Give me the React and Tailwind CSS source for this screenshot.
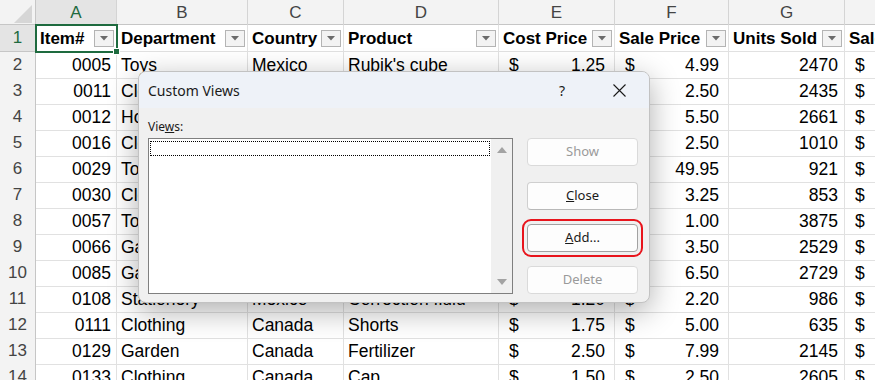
import React from "react";

const GRID = "grid grid-cols-[36px_81px_131px_96px_155px_116px_114px_116px_116px] w-[961px]";

const rows = [
  ["0005", "Toys", "Mexico", "Rubik's cube", "1.25", "4.99", "2470"],
  ["0011", "Clothing", "Canada", "Hat", "1.00", "2.50", "2435"],
  ["0012", "Home", "Mexico", "Coffee mug", "2.00", "5.50", "2661"],
  ["0016", "Clothing", "Canada", "Socks", "0.75", "2.50", "1010"],
  ["0029", "Toys", "Mexico", "Scooter", "20.00", "49.95", "921"],
  ["0030", "Clothing", "Mexico", "Belt", "1.10", "3.25", "853"],
  ["0057", "Toys", "Canada", "Yo-yo", "0.25", "1.00", "3875"],
  ["0066", "Garden", "Canada", "Seeds", "1.00", "3.50", "2529"],
  ["0085", "Garden", "Mexico", "Gloves", "2.00", "6.50", "2729"],
  ["0108", "Stationery", "Mexico", "Correction fluid", "1.20", "2.20", "986"],
  ["0111", "Clothing", "Canada", "Shorts", "1.75", "5.00", "635"],
  ["0129", "Garden", "Canada", "Fertilizer", "2.50", "7.99", "2145"],
  ["0133", "Clothing", "Canada", "Cap", "1.50", "2.50", "2605"],
];

const headers = ["Item#", "Department", "Country", "Product", "Cost Price", "Sale Price", "Units Sold", "Sales"];
const letters = ["A", "B", "C", "D", "E", "F", "G", "H"];

// filter dropdown box in header cells
const FilterBtn = () => (
  <div className="ml-auto mr-[2px] w-[20px] h-[17px] shrink-0 border border-[#b4b4b4] bg-[#f3f3f3] flex items-center justify-center">
    <svg width="8" height="5" viewBox="0 0 8 5">
      <path d="M0 0 L8 0 L4 4.5 Z" fill="#6b6b6b" />
    </svg>
  </div>
);

const Acct = ({ value }) => (
  <div className="flex items-center justify-between w-full pl-[10px] pr-[9px]">
    <span>$</span>
    <span>{value}</span>
  </div>
);

const cell = "border-r border-b border-[#e1e1e1] flex items-center whitespace-nowrap overflow-hidden";

const Sheet = () => (
  <div className="text-black" style={{ fontFamily: '"Liberation Sans", Arial, sans-serif' }}>
    {/* column letters */}
    <div className={`${GRID} h-[25px] bg-[#f3f3f3] border-b border-[#c6c6c6]`}>
      <div className="border-r border-[#c6c6c6] flex items-end justify-end pr-[3px] pb-[3px]">
        <svg width="18" height="18" viewBox="0 0 18 18">
          <path d="M18 0 L18 18 L0 18 Z" fill="#d6d6d6" />
        </svg>
      </div>
      {letters.map((l, i) => (
        <div
          key={l}
          className={`border-r border-[#d4d4d4] flex items-center justify-center text-[17px] ${
            i === 0 ? "bg-[#e4e4e4] text-[#1e6b3f]" : "text-[#444]"
          }`}
        >
          {l}
        </div>
      ))}
    </div>

    {/* header row */}
    <div className={`${GRID} h-[27px]`}>
      <div className="bg-[#e4e4e4] border-r border-b border-[#c6c6c6] flex items-center justify-center text-[17px] text-[#1e6b3f]">
        1
      </div>
      {headers.map((h, i) => (
        <div key={h} className={`${cell} pl-[4px] pt-[1px] font-bold text-[17px]`}>
          <span>{h}</span>
          {i < 7 && <FilterBtn />}
        </div>
      ))}
    </div>

    {rows.map((r, idx) => (
      <div key={r[0]} className={`${GRID} h-[26px] text-[17.5px]`}>
        <div className="bg-[#f3f3f3] border-r border-[#c6c6c6] border-b border-b-[#dadada] flex items-center justify-center text-[17px] text-[#444]">
          {idx + 2}
        </div>
        <div className={`${cell} justify-end pr-[5px]`}>{r[0]}</div>
        <div className={`${cell} pl-[4px]`}>{r[1]}</div>
        <div className={`${cell} pl-[4px]`}>{r[2]}</div>
        <div className={`${cell} pl-[4px]`}>{r[3]}</div>
        <div className={cell}>
          <Acct value={r[4]} />
        </div>
        <div className={cell}>
          <Acct value={r[5]} />
        </div>
        <div className={`${cell} justify-end pr-[6px]`}>{r[6]}</div>
        <div className={`${cell} pl-[10px]`}>$</div>
      </div>
    ))}
  </div>
);

const DlgButton = ({ children, disabled, className = "" }) => (
  <div
    className={`w-[111px] h-[28px] rounded-[4px] border bg-[#fdfdfd] flex items-center justify-center text-[13px] ${
      disabled ? "border-[#dadada] text-[#9a9a9a]" : "border-[#cfcfcf] border-b-[#b8b8b8] text-[#1a1a1a]"
    } ${className}`}
  >
    {children}
  </div>
);

const Dialog = () => (
  <div
    className="absolute left-[138px] top-[71px] w-[512px] h-[232px] rounded-[8px] border border-[#c2c2c2] bg-[#f0f0f0] overflow-hidden shadow-[0_8px_30px_rgba(0,0,0,0.32)]"
    style={{ fontFamily: '"Noto Sans", "Open Sans", sans-serif' }}
  >
    <div className="h-[36px] bg-[#eef2f8] flex items-center pl-[9px]">
      <span className="text-[14px] text-[#1a1a1a]">Custom Views</span>
      <div className="ml-auto flex items-center h-full">
        <div className="w-[46px] flex justify-center text-[14px] text-[#1a1a1a]">?</div>
        <div className="w-[46px] ml-[11px] mr-[7px] flex justify-center">
          <svg width="13" height="13" viewBox="0 0 13 13">
            <path d="M0.5 0.5 L12.5 12.5 M12.5 0.5 L0.5 12.5" stroke="#1a1a1a" strokeWidth="1.1" />
          </svg>
        </div>
      </div>
    </div>

    <div className="flex items-start pl-[9px] pt-[11px]">
      <div>
        <div className="text-[12px] leading-[16px] text-[#1a1a1a]">
          Vie<span className="underline">w</span>s:
        </div>
        <div className="mt-[3px] w-[365px] h-[156px] border border-[#7f7f7f] bg-white flex">
          <div className="relative flex-1">
            <div className="absolute left-[1px] right-[1px] top-[2px] h-[15px] border border-dotted border-black" />
          </div>
          <div className="w-[21px] bg-[#f0f0f0] flex flex-col items-center justify-between py-[8px]">
            <svg width="10" height="6" viewBox="0 0 10 6">
              <path d="M0 6 L10 6 L5 0 Z" fill="#a3a3a3" />
            </svg>
            <svg width="10" height="6" viewBox="0 0 10 6">
              <path d="M0 0 L10 0 L5 6 Z" fill="#a3a3a3" />
            </svg>
          </div>
        </div>
      </div>

      <div className="ml-[14px] mt-[19px] flex flex-col">
        <DlgButton disabled>Show</DlgButton>
        <DlgButton className="mt-[16px]">
          <span className="underline">C</span>lose
        </DlgButton>
        <DlgButton className="mt-[14px] !border-[#a2a2a2] outline-2 outline-[#e8141c] outline-offset-[3px]">
          <span className="underline">A</span>dd...
        </DlgButton>
        <DlgButton disabled className="mt-[14px]">
          Delete
        </DlgButton>
      </div>
    </div>
  </div>
);

export default function App() {
  return (
    <div className="relative w-[875px] h-[380px] overflow-hidden bg-white">
      <Sheet />
      {/* active cell A1 */}
      <div className="absolute left-[35px] top-[24px] w-[83px] h-[29px] border-2 border-[#1e6b3f]" />
      <div className="absolute left-[113px] top-[48px] w-[7px] h-[7px] bg-[#1e6b3f] border border-white" />
      <Dialog />
    </div>
  );
}
